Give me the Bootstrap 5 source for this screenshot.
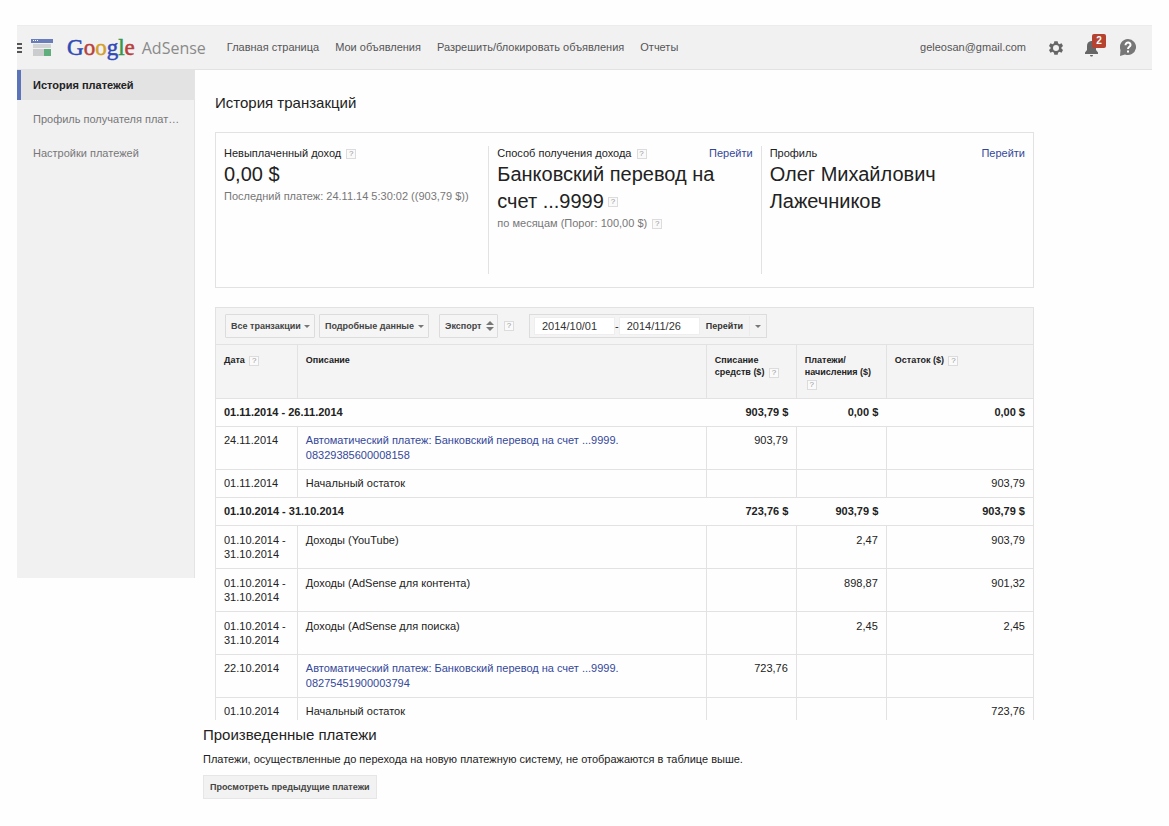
<!DOCTYPE html>
<html lang="ru">
<head>
<meta charset="utf-8">
<meta name="viewport" content="width=device-width, initial-scale=1">
<title>Google AdSense – История платежей</title>
<link rel="stylesheet" href="https://cdn.jsdelivr.net/npm/bootstrap@5.3.0/dist/css/bootstrap.min.css">
<style>
  :root { --line: #e2e2e3; --panel: #f4f4f5; --ink: #222; --muted: #777; --go: #34489a; }
  body { font: 11px/15px "Liberation Sans", Arial, sans-serif; color: var(--ink); background: #fefefe; }
  a { color: var(--go); text-decoration: none; }
  a:hover { text-decoration: underline; }
  .shell { padding: 25px 17px 28px; }

  .topbar { min-height: 45px; background: #f1f1f2; border-top: 1px solid #ececec; border-bottom: 1px solid #e2e2e4; padding-right: 16px; }
  .topbar a, .topbar .account { color: #555; }
  .topbar .icon-btn { border: 0; padding: 0; background: none; line-height: 0; }
  .topbar .actions { gap: 20px; margin-left: 22px; }
  .brand { margin-left: 14px; height: 43px; }
  .brand .google { font: 23px/30px "Liberation Serif", serif; -webkit-text-stroke: 0.5px currentColor; }
  .brand .product { font: 16px/30px "Open Sans", sans-serif; color: #8a8a8a; margin-left: 7px; }
  .g-blue { color: #2f49b5; } .g-red { color: #b8403c; } .g-gold { color: #d3a02c; } .g-green { color: #35984a; }
  .topnav { margin-left: 21px; gap: 16px; }
  .notice { font: bold 10px/14px "Liberation Sans", Arial, sans-serif; width: 14px; height: 14px; top: -5px; left: 8px; background: #b5432f; color: #fff; border-radius: 2px; }

  .side { width: 178px; height: 508px; background: #f1f1f2; border-right: 1px solid #e4e4e6; }
  .side a { display: block; padding: 8px 8px 7px 16px; line-height: 15px; margin-bottom: 4px; color: #777; }
  .side a.current { color: var(--ink); font-weight: bold; background: #e3e3e4; border-left: 4px solid #5b73b8; padding-left: 12px; }

  .page-title { font-size: 15px; line-height: 20px; margin: 23px 0 19px; }
  .content { padding-left: 8px; padding-right: 118px; }
  .inset { padding-left: 12px; }
  .summary { border: 1px solid var(--line); padding: 13px 0 13px; min-height: 156px; margin-bottom: 19px; }
  .summary .cell { padding: 0 8px; min-height: 127px; width: 33.333%; }
  .summary .cell + .cell { border-left: 1px solid var(--line); }
  .big { font-size: 20px; line-height: 27px; }
  .soft { color: var(--muted); line-height: 17px; }
  .help { display: inline-block; width: 10px; height: 10px; padding: 0; border: 1px solid #dcdcdc; background: #fafafa; color: #999; font: 8px/8px "Liberation Sans", Arial, sans-serif; text-align: center; vertical-align: middle; margin-left: 2px; }

  .toolbar { background: var(--panel); border: 1px solid var(--line); border-bottom: 0; padding: 6px 9px; min-height: 37px; }
  .tool { height: 24px; border: 1px solid #dcdcdc; border-radius: 1px; background-color: #f5f5f5; color: #444; font-size: 9px; font-weight: bold; line-height: 14px; padding: 0 5px; width: auto; }
  .tool.form-select { padding-right: 11px; background-position: right 4px center; background-size: 6px 10px;
    --bs-form-select-bg-img: url("data:image/svg+xml,%3csvg xmlns='http://www.w3.org/2000/svg' viewBox='0 0 6 10'%3e%3cpath fill='%23777' d='M0 4h6L3 7z'/%3e%3c/svg%3e"); }
  .tool.both { background-size: 8px 12px; background-position: right 3px center; --bs-form-select-bg-img: url("data:image/svg+xml,%3csvg xmlns='http://www.w3.org/2000/svg' viewBox='0 0 8 12'%3e%3cpath fill='%23777' d='M0 5h8L4 1zM0 7h8L4 11z'/%3e%3c/svg%3e"); }
  .t-kind { width: 90px; } .t-detail { width: 110px; } .t-export { width: 59px; margin-left: 10px; }
  .toolbar > .help { margin: 0 15px 0 6px; }
  .range { height: 24px; border: 1px solid #dcdcdc; padding: 0 0 0 4px; }
  .range input { width: 81px; height: 18px; border: 1px solid #eee; border-radius: 0; padding: 0 7px; font-size: 11px; line-height: 15px; color: #333; background: #fff; }
  .range button { height: 20px; border: 1px solid #ebebeb; border-width: 0 1px 0 0; background: #f3f3f3; color: #333; font-size: 9px; font-weight: bold; padding: 0 6px; }
  .range .more { border: 0; padding: 0 5px; }
  .caret-down { display: block; border: 3px solid transparent; border-top-color: #777; border-bottom: 0; }

  .ledger { table-layout: fixed; width: 100%; border: 1px solid var(--line); border-bottom: 0; }
  .ledger th, .ledger td { border-top: 1px solid var(--line); padding: 6px 8px; vertical-align: top; }
  .ledger th + th, .ledger td + td { border-left: 1px solid var(--line); }
  .ledger thead th { background: var(--panel); font-size: 9px; line-height: 12px; height: 54px; padding-top: 9px; padding-bottom: 2px; }
  .ledger .period th { border-left: 0; }
  .ledger .month td { padding-top: 7px; padding-bottom: 7px; line-height: 14px; }
  .ledger .num { text-align: right; }
  .ledger .final td { padding-bottom: 1px; }
  .c-date { width: 10%; } .c-money { width: 11%; } .c-rest { width: 18%; }

  .past h2 { font-size: 15px; line-height: 20px; margin: 5px 0 7px; }
  .past p { margin: 0 0 8px; }
  .past .btn { font-size: 9px; font-weight: bold; line-height: 14px; color: #444; background: #f2f2f2; border: 1px solid #e6e6e6; border-radius: 0; padding: 4px 6px; }
</style>
</head>
<body>
<div class="shell">
  <header class="topbar d-flex align-items-center">
    <button class="icon-btn" type="button" aria-label="Меню">
      <svg width="6" height="12" viewBox="0 0 6 12"><path d="M0 1h5v2H0zM0 5h5v2H0zM0 9h5v2H0z" fill="#555"/></svg>
    </button>
    <svg class="ms-2" width="22" height="18" viewBox="0 0 22 18" aria-hidden="true">
      <path d="M0 0h22v4H0z" fill="#6a7dbb"/><path d="M2 1h1v1H2zM4 1h1v1H4zM6 1h1v1H6z" fill="#fff"/>
      <path d="M2 5h18v4H2z" fill="#d2d3d4"/><path d="M2 10h11v7H2z" fill="#cbcccd"/><path d="M13 10h7v7h-7z" fill="#5fae7c"/>
    </svg>
    <a class="brand d-flex align-items-center" href="#"><span class="google"><span class="g-blue">G</span><span class="g-red">o</span><span class="g-gold">o</span><span class="g-blue">g</span><span class="g-green">l</span><span class="g-red">e</span></span><span class="product">AdSense</span></a>
    <nav class="topnav d-flex flex-grow-1">
      <a href="#">Главная страница</a>
      <a href="#">Мои объявления</a>
      <a href="#">Разрешить/блокировать объявления</a>
      <a href="#">Отчеты</a>
    </nav>
    <span class="account">geleosan@gmail.com</span>
    <div class="actions d-flex align-items-center">
      <button class="icon-btn" type="button" aria-label="Настройки">
        <svg class="d-block" width="16" height="16" viewBox="0 0 24 24"><path fill="#666" fill-rule="evenodd" d="M9.500 2h5l.6 3 2 1.200 3.200-1.200 2.200 4-2.400 2.200v1.600l2.400 2.200-2.200 4-3.200-1.200-2 1.200-.6 3h-5l-.6-3-2-1.200L3.700 19l-2.200-4 2.400-2.200v-1.600L1.500 9l2.200-4 3.200 1.200 2-1.200zM12 7.500a4.500 4.500 0 1 0 0 9 4.500 4.500 0 0 0 0-9z"/></svg>
      </button>
      <button class="icon-btn position-relative" type="button" aria-label="Уведомления: 2">
        <svg class="d-block" width="16" height="18" viewBox="0 0 16 18"><path fill="#666" d="M7 2c-3 .6-4 2.600-4 5v4l-2 2.500V15h13v-1.500L12 11V7c0-2.400-1-4.400-4-5zM6 16h3c0 2-3 2-3 0z"/></svg>
        <span class="notice position-absolute">2</span>
      </button>
      <button class="icon-btn" type="button" aria-label="Справка">
        <svg class="d-block" width="16" height="17" viewBox="0 0 16 17"><path fill="#777" d="M8 0a8 8 0 1 1-3 15.400L0 17l.5-6A8 8 0 0 1 8 0z"/><path d="M5.500 6.200c0-3.600 5.400-3.400 5 0C10.300 7.800 8 8 8 10" fill="none" stroke="#fff" stroke-width="2"/><path d="M7 11.500h2v2H7z" fill="#fff"/></svg>
      </button>
    </div>
  </header>

  <div class="d-flex align-items-start">
    <nav class="side flex-shrink-0">
      <a class="current" href="#">История платежей</a>
      <a class="text-nowrap" href="#">Профиль получателя плат…</a>
      <a href="#">Настройки платежей</a>
    </nav>

    <main class="content flex-grow-1">
      <div class="inset">
        <h1 class="page-title fw-normal">История транзакций</h1>

        <section class="summary d-flex">
          <div class="cell">
            <div>Невыплаченный доход <button class="help" type="button">?</button></div>
            <div class="big">0,00 $</div>
            <div class="soft">Последний платеж: 24.11.14 5:30:02 ((903,79 $))</div>
          </div>
          <div class="cell">
            <div class="d-flex justify-content-between"><span>Способ получения дохода <button class="help" type="button">?</button></span><a href="#">Перейти</a></div>
            <div class="big">Банковский перевод на</div>
            <div class="d-flex align-items-center"><span class="big">счет ...9999</span><button class="help ms-1" type="button">?</button></div>
            <div class="soft">по месяцам (Порог: 100,00 $) <button class="help" type="button">?</button></div>
          </div>
          <div class="cell">
            <div class="d-flex justify-content-between"><span>Профиль</span><a href="#">Перейти</a></div>
            <div class="big">Олег Михайлович Лажечников</div>
          </div>
        </section>

        <div class="toolbar d-flex align-items-center">
          <select class="form-select tool t-kind" aria-label="Тип транзакций"><option>Все транзакции</option></select>
          <select class="form-select tool t-detail ms-1" aria-label="Вид данных"><option>Подробные данные</option></select>
          <select class="form-select tool both t-export" aria-label="Экспорт"><option>Экспорт</option></select>
          <button class="help" type="button">?</button>
          <div class="range d-flex align-items-center">
            <input type="text" value="2014/10/01" aria-label="Начало периода">
            <span>-</span>
            <input type="text" value="2014/11/26" aria-label="Конец периода">
            <button type="button">Перейти</button>
            <button class="more" type="button" aria-label="Другие периоды"><span class="caret-down"></span></button>
          </div>
        </div>

        <table class="ledger">
          <colgroup><col class="c-date"><col><col class="c-money"><col class="c-money"><col class="c-rest"></colgroup>
          <thead>
            <tr>
              <th>Дата <button class="help" type="button">?</button></th>
              <th>Описание</th>
              <th>Списание средств ($) <button class="help" type="button">?</button></th>
              <th>Платежи/ начисления ($) <button class="help" type="button">?</button></th>
              <th>Остаток ($) <button class="help" type="button">?</button></th>
            </tr>
          </thead>
          <tbody>
            <tr class="period"><th colspan="2">01.11.2014 - 26.11.2014</th><th class="num">903,79 $</th><th class="num">0,00 $</th><th class="num">0,00 $</th></tr>
            <tr><td>24.11.2014</td><td><a href="#">Автоматический платеж: Банковский перевод на счет ...9999.<br>08329385600008158</a></td><td class="num">903,79</td><td></td><td></td></tr>
            <tr><td>01.11.2014</td><td>Начальный остаток</td><td></td><td></td><td class="num">903,79</td></tr>
            <tr class="period"><th colspan="2">01.10.2014 - 31.10.2014</th><th class="num">723,76 $</th><th class="num">903,79 $</th><th class="num">903,79 $</th></tr>
            <tr class="month"><td>01.10.2014 -<br>31.10.2014</td><td>Доходы (YouTube)</td><td></td><td class="num">2,47</td><td class="num">903,79</td></tr>
            <tr class="month"><td>01.10.2014 -<br>31.10.2014</td><td>Доходы (AdSense для контента)</td><td></td><td class="num">898,87</td><td class="num">901,32</td></tr>
            <tr class="month"><td>01.10.2014 -<br>31.10.2014</td><td>Доходы (AdSense для поиска)</td><td></td><td class="num">2,45</td><td class="num">2,45</td></tr>
            <tr><td>22.10.2014</td><td><a href="#">Автоматический платеж: Банковский перевод на счет ...9999.<br>08275451900003794</a></td><td class="num">723,76</td><td></td><td></td></tr>
            <tr class="final"><td>01.10.2014</td><td>Начальный остаток</td><td></td><td></td><td class="num">723,76</td></tr>
          </tbody>
        </table>
      </div>

      <section class="past">
        <h2 class="fw-normal">Произведенные платежи</h2>
        <p>Платежи, осуществленные до перехода на новую платежную систему, не отображаются в таблице выше.</p>
        <button class="btn" type="button">Просмотреть предыдущие платежи</button>
      </section>
    </main>
  </div>
</div>
<script src="https://cdn.jsdelivr.net/npm/bootstrap@5.3.0/dist/js/bootstrap.bundle.min.js"></script>
</body>
</html>
